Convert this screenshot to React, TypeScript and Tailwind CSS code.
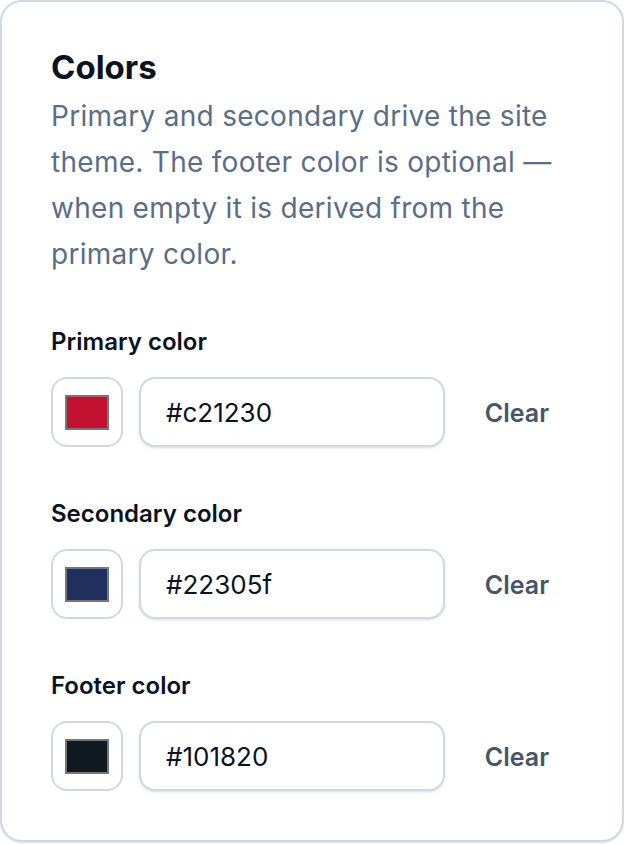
import { useState } from "react";

type ColorField = { key: string; label: string; value: string };

const FIELDS: ColorField[] = [
  { key: "primary", label: "Primary color", value: "#c21230" },
  { key: "secondary", label: "Secondary color", value: "#22305f" },
  { key: "footer", label: "Footer color", value: "#101820" },
];

function ColorRow({ field }: { field: ColorField }) {
  const [value, setValue] = useState(field.value);

  return (
    <div className="flex flex-col">
      <label className="text-[24px] leading-[32px] font-semibold text-[#0b1222] mb-[19px]">
        {field.label}
      </label>
      <div className="flex items-center gap-4">
        <div className="w-[72px] h-[70px] shrink-0 rounded-[16px] border-2 border-[#cfd9e6] bg-white flex items-center justify-center">
          <div
            className="w-[44px] h-[35px] border-2 border-[#767676]"
            style={{ backgroundColor: value || "#ffffff" }}
          />
        </div>
        <input
          value={value}
          onChange={(e) => setValue(e.target.value)}
          className="flex-1 min-w-0 h-[70px] rounded-[16px] border-2 border-[#cfd9e6] bg-white px-[25px] text-[26px] text-[#0b1222] shadow-sm outline-none"
        />
        <button
          type="button"
          onClick={() => setValue("")}
          className="w-[112px] shrink-0 pt-[4px] text-center text-[25px] font-semibold text-[#475569]"
        >
          Clear
        </button>
      </div>
    </div>
  );
}

export default function App() {
  return (
    <div
      className="min-h-screen bg-white"
      style={{ fontFamily: "Inter, 'Noto Sans', sans-serif" }}
    >
      <section className="w-[624px] h-[842px] rounded-[22px] border-2 border-[#cfd9e6] bg-white shadow-sm px-[49px] pt-[43px] pb-[48px]">
        <h2 className="text-[33px] leading-[44px] font-bold text-[#0b1222]">Colors</h2>
        <p className="mt-[4px] text-[28px] leading-[46px] tracking-[0.01em] text-[#5b6d88]">
          Primary and secondary drive the site theme. The footer color is optional — when empty it is derived from the primary color.
        </p>
        <div className="mt-[49px] flex flex-col gap-[51px]">
          {FIELDS.map((f) => (
            <ColorRow key={f.key} field={f} />
          ))}
        </div>
      </section>
    </div>
  );
}
